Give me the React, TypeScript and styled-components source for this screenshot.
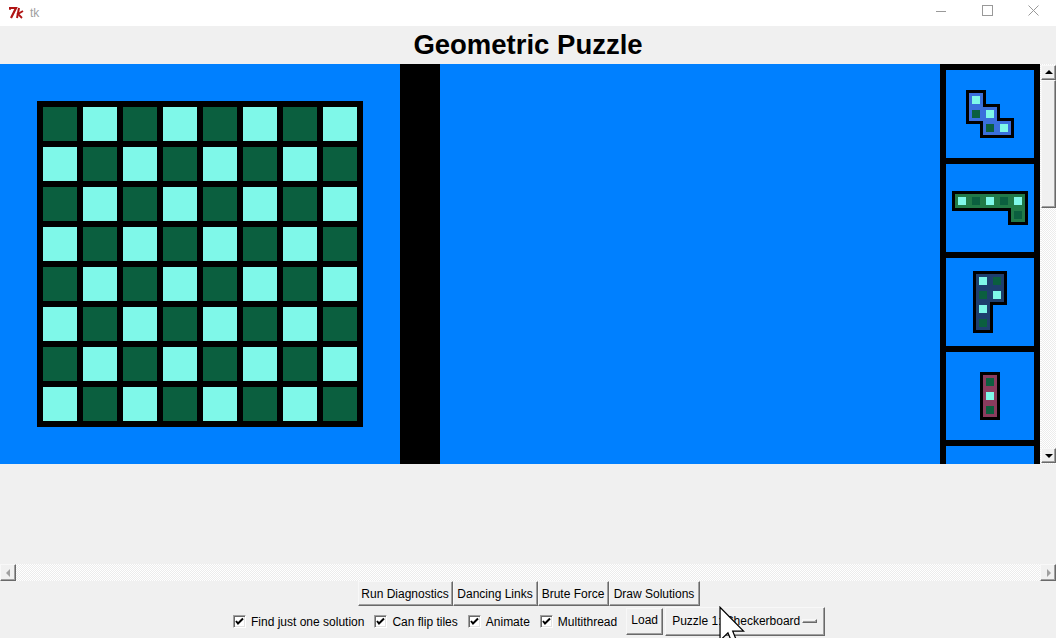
import React from "react";
import styled, { createGlobalStyle } from "styled-components";

const BLUE = "#0080ff";
const DARK = "#0b5f3f";
const LIGHT = "#7ff8e9";
const FACE = "#f0f0f0";
const CELL = 14;

type Cell = [number, number, boolean];

interface PieceType {
  fill: string;
  cells: Cell[];
}

const pieces: PieceType[] = [
  {
    fill: "#3a6fdc",
    cells: [
      [0, 0, true],
      [0, 1, false],
      [1, 1, true],
      [1, 2, false],
      [2, 2, true],
    ],
  },
  {
    fill: "#217a48",
    cells: [
      [0, 0, true],
      [1, 0, false],
      [2, 0, true],
      [3, 0, false],
      [4, 0, true],
      [4, 1, false],
    ],
  },
  {
    fill: "#1e3f6e",
    cells: [
      [0, 0, true],
      [1, 0, false],
      [0, 1, false],
      [1, 1, true],
      [0, 2, true],
      [0, 3, false],
    ],
  },
  {
    fill: "#8a3c5e",
    cells: [
      [0, 0, false],
      [0, 1, true],
      [0, 2, false],
    ],
  },
];

const GlobalStyle = createGlobalStyle`
  html, body {
    margin: 0;
    padding: 0;
    background: ${FACE};
    overflow: hidden;
  }
  body {
    font-family: "Liberation Sans", Arial, sans-serif;
  }
`;

const PieceShape = ({ piece }: { piece: PieceType }) => {
  const cols = Math.max(...piece.cells.map((c) => c[0])) + 1;
  const rows = Math.max(...piece.cells.map((c) => c[1])) + 1;
  return (
    <svg width={cols * CELL + 6} height={rows * CELL + 6}>
      {piece.cells.map(([c, r], i) => (
        <rect key={"o" + i} x={c * CELL} y={r * CELL} width={CELL + 6} height={CELL + 6} fill="#000" />
      ))}
      {piece.cells.map(([c, r], i) => (
        <rect key={"f" + i} x={c * CELL + 3} y={r * CELL + 3} width={CELL} height={CELL} fill={piece.fill} />
      ))}
      {piece.cells.map(([c, r, light], i) => (
        <rect key={"d" + i} x={c * CELL + 6} y={r * CELL + 6} width={8} height={8} fill={light ? LIGHT : DARK} />
      ))}
    </svg>
  );
};

const Checkbox = ({ label }: { label: string }) => (
  <CheckItem>
    <CheckBox>
      <svg width="9" height="9" viewBox="0 0 9 9">
        <path d="M1 4 L3 6.5 L8 1.5" stroke="#000" strokeWidth="2" fill="none" />
      </svg>
    </CheckBox>
    <span>{label}</span>
  </CheckItem>
);

const App = () => {
  const squares = Array.from({ length: 64 }, (_, i) => {
    const r = Math.floor(i / 8);
    const c = i % 8;
    return (r + c) % 2 === 1;
  });

  return (
    <Window>
      <GlobalStyle />
      <TitleBar>
        <TitleLeft>
          <svg width="16" height="14" viewBox="0 0 16 14">
            <path d="M1 2 L8 2 L3 12" stroke="#b01414" strokeWidth="2.2" fill="none" />
            <path d="M2 1 L2 4" stroke="#b01414" strokeWidth="1.5" />
            <path d="M11 2 L9 12" stroke="#b01414" strokeWidth="2" />
            <path d="M15 5 L10 8 L14 12" stroke="#b01414" strokeWidth="1.8" fill="none" />
          </svg>
          <WinTitle>tk</WinTitle>
        </TitleLeft>
        <Controls>
          <CtrlButton>
            <svg width="10" height="10">
              <path d="M0 5.5 H10" stroke="#999" strokeWidth="1" />
            </svg>
          </CtrlButton>
          <CtrlButton>
            <svg width="11" height="11">
              <rect x="0.5" y="0.5" width="10" height="10" stroke="#999" fill="none" />
            </svg>
          </CtrlButton>
          <CtrlButton>
            <svg width="11" height="11">
              <path d="M0.5 0.5 L10.5 10.5 M10.5 0.5 L0.5 10.5" stroke="#999" strokeWidth="1" />
            </svg>
          </CtrlButton>
        </Controls>
      </TitleBar>

      <Header>
        <Title>Geometric Puzzle</Title>
      </Header>

      <Stage>
        <Canvas>
          <Board>
            {squares.map((light, i) => (
              <Square key={i} $light={light} />
            ))}
          </Board>
          <Divider />
          <Filler />
          <Tray>
            {pieces.map((p, i) => (
              <Slot key={i}>
                <PieceShape piece={p} />
              </Slot>
            ))}
            <Slot />
          </Tray>
        </Canvas>
        <VScroll>
          <ScrollButton>
            <Arrow $dir="up" />
          </ScrollButton>
          <Thumb />
          <Track />
          <ScrollButton>
            <Arrow $dir="down" />
          </ScrollButton>
        </VScroll>
      </Stage>

      <Blank />

      <HScroll>
        <HScrollButton>
          <Arrow $dir="left" $disabled />
        </HScrollButton>
        <Track />
        <HScrollButton>
          <Arrow $dir="right" $disabled />
        </HScrollButton>
      </HScroll>

      <ButtonRow>
        <Button $w={95}>Run Diagnostics</Button>
        <Button $w={85}>Dancing Links</Button>
        <Button $w={71}>Brute Force</Button>
        <Button $w={91}>Draw Solutions</Button>
      </ButtonRow>

      <OptionRow>
        <Checkbox label="Find just one solution" />
        <Checkbox label="Can flip tiles" />
        <Checkbox label="Animate" />
        <Checkbox label="Multithread" />
        <LoadButton>Load</LoadButton>
        <MenuButton>
          <span>Puzzle 1: Checkerboard</span>
          <Indicator />
        </MenuButton>
      </OptionRow>

      <Cursor width="26" height="42" viewBox="0 0 12.5 20">
        <path
          d="M0.5 0.5 L0.5 16.5 L4.3 12.8 L6.8 18.8 L9 17.9 L6.6 12 L11.8 12 Z"
          fill="#fff"
          stroke="#000"
          strokeWidth="0.6"
          strokeLinejoin="miter"
        />
      </Cursor>
    </Window>
  );
};

export default App;

const Window = styled.div`
  position: relative;
  display: flex;
  flex-direction: column;
  width: 1056px;
  height: 638px;
  overflow: hidden;
  background: ${FACE};
`;

const TitleBar = styled.div`
  display: flex;
  justify-content: space-between;
  align-items: center;
  height: 26px;
  background: #fff;
`;

const TitleLeft = styled.div`
  display: flex;
  align-items: center;
  padding-left: 8px;
  gap: 6px;
`;

const WinTitle = styled.span`
  font-size: 12px;
  color: #a0a0a0;
  font-family: "Liberation Sans", Arial, sans-serif;
`;

const Controls = styled.div`
  display: flex;
  height: 100%;
`;

const CtrlButton = styled.div`
  display: flex;
  align-items: center;
  justify-content: center;
  width: 46px;
  height: 100%;
  padding-bottom: 5px;
  box-sizing: border-box;
`;

const Header = styled.div`
  display: flex;
  justify-content: center;
  align-items: center;
  height: 38px;
`;

const Title = styled.h1`
  margin: 0;
  font-family: "Liberation Sans", Arial, sans-serif;
  font-weight: bold;
  font-size: 27.5px;
  color: #000;
  line-height: 38px;
`;

const Stage = styled.div`
  display: flex;
  height: 400px;
`;

const Canvas = styled.div`
  display: flex;
  align-items: flex-start;
  width: 1040px;
  height: 400px;
  background: ${BLUE};
  overflow: hidden;
`;

const Board = styled.div`
  display: grid;
  grid-template-columns: repeat(8, 34px);
  grid-auto-rows: 34px;
  gap: 6px;
  padding: 6px;
  margin: 37px 0 0 37px;
  background: #000;
  flex-shrink: 0;
`;

const Square = styled.div<{ $light: boolean }>`
  background: ${(p) => (p.$light ? LIGHT : DARK)};
`;

const Divider = styled.div`
  align-self: stretch;
  width: 40px;
  margin-left: 37px;
  background: #000;
  flex-shrink: 0;
`;

const Filler = styled.div`
  flex: 1;
`;

const Tray = styled.div`
  display: flex;
  flex-direction: column;
  gap: 6px;
  width: 100px;
  height: 400px;
  padding: 6px;
  box-sizing: border-box;
  background: #000;
  overflow: hidden;
  flex-shrink: 0;
`;

const Slot = styled.div`
  display: flex;
  align-items: center;
  justify-content: center;
  width: 88px;
  height: 88px;
  flex-shrink: 0;
  background: ${BLUE};
`;

const checker = `
  background-color: #fff;
  background-image: repeating-conic-gradient(#ececec 0 25%, #ffffff 0 50%);
  background-size: 2px 2px;
`;

const VScroll = styled.div`
  display: flex;
  flex-direction: column;
  width: 16px;
  padding: 1px 0 1px 1px;
  box-sizing: border-box;
  ${checker}
`;

const raised = `
  background: ${FACE};
  border: 1px solid;
  border-color: #f8f8f8 #696969 #696969 #f8f8f8;
  box-shadow: inset -1px -1px #a0a0a0;
  box-sizing: border-box;
`;

const ScrollButton = styled.div`
  display: flex;
  align-items: center;
  justify-content: center;
  height: 15px;
  flex-shrink: 0;
  ${raised}
`;

const Thumb = styled.div`
  height: 128px;
  flex-shrink: 0;
  ${raised}
`;

const Track = styled.div`
  flex: 1;
  ${checker}
`;

const Arrow = styled.div<{ $dir: "up" | "down" | "left" | "right"; $disabled?: boolean }>`
  width: 0;
  height: 0;
  border: 4px solid transparent;
  ${(p) => {
    const c = p.$disabled ? "#a0a0a0" : "#000";
    switch (p.$dir) {
      case "up":
        return `border-bottom-color: ${c}; border-top-width: 0; margin-top: -1px;`;
      case "down":
        return `border-top-color: ${c}; border-bottom-width: 0; margin-top: 1px;`;
      case "left":
        return `border-right-color: ${c}; border-left-width: 0;`;
      default:
        return `border-left-color: ${c}; border-right-width: 0; margin-left: 2px;`;
    }
  }}
`;

const Blank = styled.div`
  height: 100px;
`;

const HScroll = styled.div`
  display: flex;
  height: 17px;
  ${checker}
`;

const HScrollButton = styled.div`
  display: flex;
  align-items: center;
  justify-content: center;
  width: 16px;
  height: 17px;
  flex-shrink: 0;
  ${raised}
`;

const ButtonRow = styled.div`
  display: flex;
  justify-content: center;
  height: 25px;
  padding-left: 1px;
`;

const buttonBase = `
  display: flex;
  align-items: center;
  justify-content: center;
  font-family: "Liberation Sans", Arial, sans-serif;
  font-size: 12px;
  color: #000;
  white-space: nowrap;
  ${raised}
`;

const Button = styled.div<{ $w: number }>`
  ${buttonBase}
  width: ${(p) => p.$w}px;
  height: 25px;
`;

const OptionRow = styled.div`
  display: flex;
  justify-content: flex-start;
  align-items: center;
  height: 30px;
  padding-left: 228px;
  font-size: 12px;
  color: #000;
`;

const CheckItem = styled.label`
  display: flex;
  align-items: center;
  gap: 5px;
  padding: 0 5px;
  white-space: nowrap;
  & > span {
    padding-top: 2px;
  }
`;

const CheckBox = styled.div`
  display: flex;
  align-items: center;
  justify-content: center;
  width: 13px;
  height: 13px;
  box-sizing: border-box;
  background: #fff;
  border: 1px solid;
  border-color: #a0a0a0 #fff #fff #a0a0a0;
  box-shadow: inset 1px 1px #696969, inset -1px -1px #e3e3e3;
`;

const LoadButton = styled.div`
  ${buttonBase}
  width: 37px;
  height: 27px;
  margin-left: 4px;
  padding-bottom: 2px;
`;

const MenuButton = styled.div`
  ${buttonBase}
  justify-content: space-between;
  width: 160px;
  height: 29px;
  margin-left: 2px;
  padding: 0 7px 0 6px;
`;

const Indicator = styled.div`
  width: 15px;
  height: 4px;
  ${raised}
`;

const Cursor = styled.svg`
  position: absolute;
  left: 719px;
  top: 606px;
  pointer-events: none;
`;
